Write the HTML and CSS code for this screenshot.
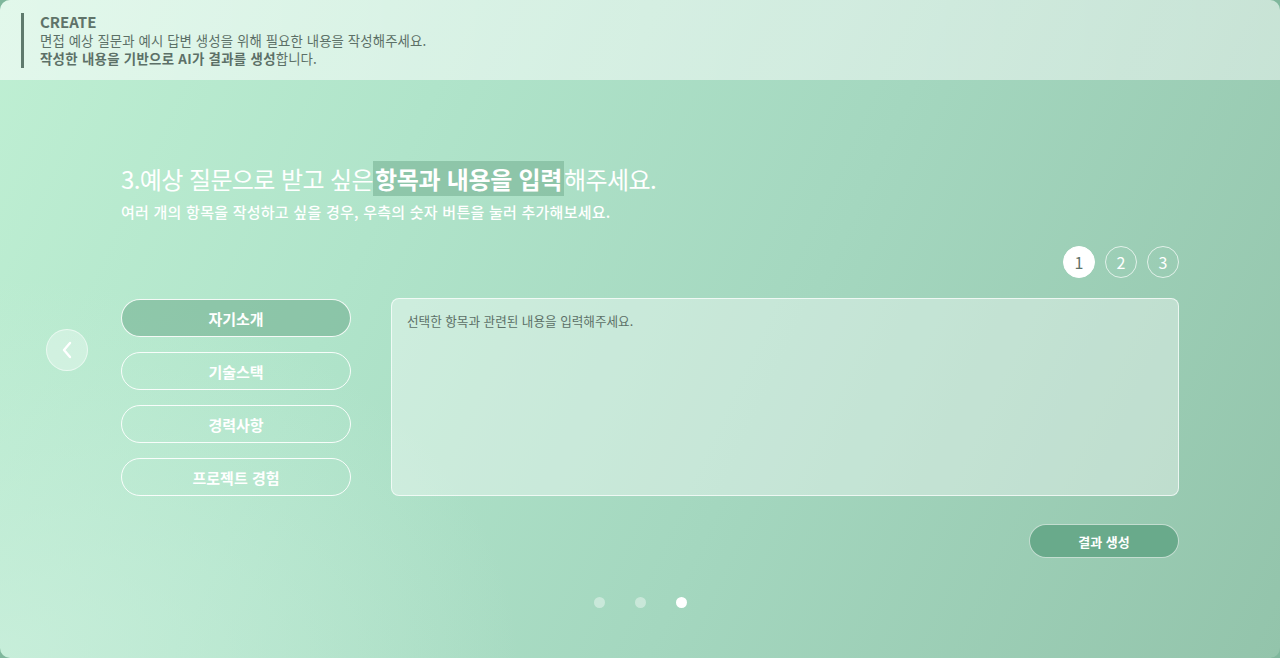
FILE: index.html
```html
<!DOCTYPE html>
<html lang="ko">
<head>
<meta charset="utf-8">
<title>CREATE</title>
<link rel="stylesheet" href="styles.css">
</head>
<body>
<div class="page">
  <header class="intro">
    <div class="intro-inner">
      <div class="intro-title">CREATE</div>
      <div class="intro-line">면접 예상 질문과 예시 답변 생성을 위해 필요한 내용을 작성해주세요.</div>
      <div class="intro-line"><b>작성한 내용을 기반으로 AI가 결과를 생성</b>합니다.</div>
    </div>
  </header>
  <main class="stage">
    <button class="nav-prev" aria-label="이전">
      <svg width="14" height="20" viewBox="0 0 14 20"><path d="M10 3 L4 10 L10 17" fill="none" stroke="#fff" stroke-width="2.4" stroke-linecap="round" stroke-linejoin="round"/></svg>
    </button>
    <h1 class="q-title">3.예상 질문으로 받고 싶은<span class="hl">항목과 내용을 입력</span>해주세요.</h1>
    <p class="q-sub">여러 개의 항목을 작성하고 싶을 경우, 우측의 숫자 버튼을 눌러 추가해보세요.</p>
    <div class="nums">
      <button class="num active">1</button>
      <button class="num">2</button>
      <button class="num">3</button>
    </div>
    <div class="work">
      <div class="cats">
        <button class="cat active">자기소개</button>
        <button class="cat">기술스택</button>
        <button class="cat">경력사항</button>
        <button class="cat">프로젝트 경험</button>
      </div>
      <textarea class="content" placeholder="선택한 항목과 관련된 내용을 입력해주세요."></textarea>
    </div>
    <div class="actions">
      <button class="submit">결과 생성</button>
    </div>
    <div class="dots">
      <span class="dot"></span>
      <span class="dot"></span>
      <span class="dot active"></span>
    </div>
  </main>
</div>
</body>
</html>
```
FILE: styles.css
```css
* { box-sizing: border-box; }
html, body { margin: 0; padding: 0; }
body {
  width: 1280px;
  height: 658px;
  overflow: hidden;
  background: #7fb79c;
  font-family: "Noto Sans CJK KR", "Noto Sans", sans-serif;
}
.page {
  width: 1280px;
  height: 658px;
  border-radius: 10px;
  overflow: hidden;
  background:
    radial-gradient(ellipse 520px 380px at 0% 100%, rgba(205,240,222,0.75), rgba(205,240,222,0) 100%),
    linear-gradient(115deg, #bfefd3 0%, #b0e4ca 30%, #a4d7bf 60%, #93c4ab 100%);
  display: flex;
  flex-direction: column;
  position: relative;
}
.intro {
  height: 80px;
  background: linear-gradient(90deg, rgba(255,255,255,0.55), rgba(255,255,255,0.45));
  padding: 13px 0 0 21px;
}
.intro-inner {
  border-left: 3px solid #5f7a6d;
  padding-left: 16px;
  height: 55px;
  color: #5c7067;
}
.intro-title {
  font-size: 15px;
  font-weight: 700;
  line-height: 18px;
  color: #5f7369;
}
.intro-line {
  font-size: 13.4px;
  line-height: 18px;
  letter-spacing: 0.1px;
}
.intro-line b { font-weight: 700; letter-spacing: 0.3px; }
.stage {
  position: relative;
  flex: 1;
  padding: 81px 101px 0 121px;
  display: flex;
  flex-direction: column;
}
.nav-prev {
  position: absolute;
  left: 46px;
  top: 249px;
  width: 42px;
  height: 42px;
  border-radius: 50%;
  border: 1px solid rgba(255,255,255,0.55);
  background: rgba(255,255,255,0.32);
  display: flex;
  align-items: center;
  justify-content: center;
  padding: 0;
}
.q-title {
  margin: 0;
  font-size: 24px;
  font-weight: 400;
  line-height: 35px;
  color: #fff;
  letter-spacing: -0.6px;
}
.hl {
  background: rgba(120,178,148,0.6);
  font-weight: 700;
  letter-spacing: -0.3px;
  padding: 0 2px;
}
.q-sub {
  margin: 5px 0 0;
  font-size: 15px;
  line-height: 22px;
  font-weight: 500;
  color: #fff;
  letter-spacing: 0.25px;
}
.nums {
  display: flex;
  justify-content: flex-end;
  gap: 10px;
  margin-top: 23px;
}
.num {
  width: 32px;
  height: 32px;
  border-radius: 50%;
  border: 1px solid rgba(255,255,255,0.7);
  background: transparent;
  color: #fff;
  font-family: inherit;
  font-size: 16px;
  padding: 0;
  line-height: 30px;
}
.num.active {
  background: #fff;
  border-color: #fff;
  color: #5f7369;
}
.work {
  display: flex;
  gap: 40px;
  margin-top: 20px;
  height: 198px;
}
.cats {
  width: 230px;
  display: flex;
  flex-direction: column;
  gap: 15px;
  padding-top: 1px;
}
.cat {
  height: 38px;
  border-radius: 19px;
  border: 1px solid rgba(255,255,255,0.9);
  background: transparent;
  color: #fff;
  font-family: inherit;
  font-size: 15px;
  font-weight: 700;
  padding: 0;
}
.cat.active {
  background: rgba(110,172,140,0.55);
}
.content {
  flex: 1;
  height: 198px;
  border-radius: 8px;
  border: 1px solid rgba(255,255,255,0.7);
  background: rgba(255,255,255,0.38);
  resize: none;
  padding: 13px 15px;
  font-family: inherit;
  font-size: 12.6px;
  line-height: 18px;
  color: #556a60;
  outline: none;
}
.content::placeholder { color: #5c7067; }
.actions {
  display: flex;
  justify-content: flex-end;
  margin-top: 28px;
}
.submit {
  width: 150px;
  height: 34px;
  border-radius: 17px;
  border: 1px solid rgba(255,255,255,0.6);
  background: #69aa8b;
  color: #fff;
  font-family: inherit;
  font-size: 13px;
  font-weight: 700;
  padding: 0;
}
.dots {
  display: flex;
  justify-content: center;
  gap: 30px;
  margin-top: 39px;
  margin-left: -20px;
}
.dot {
  width: 11px;
  height: 11px;
  border-radius: 50%;
  background: rgba(255,255,255,0.4);
}
.dot.active { background: #fff; }
```
